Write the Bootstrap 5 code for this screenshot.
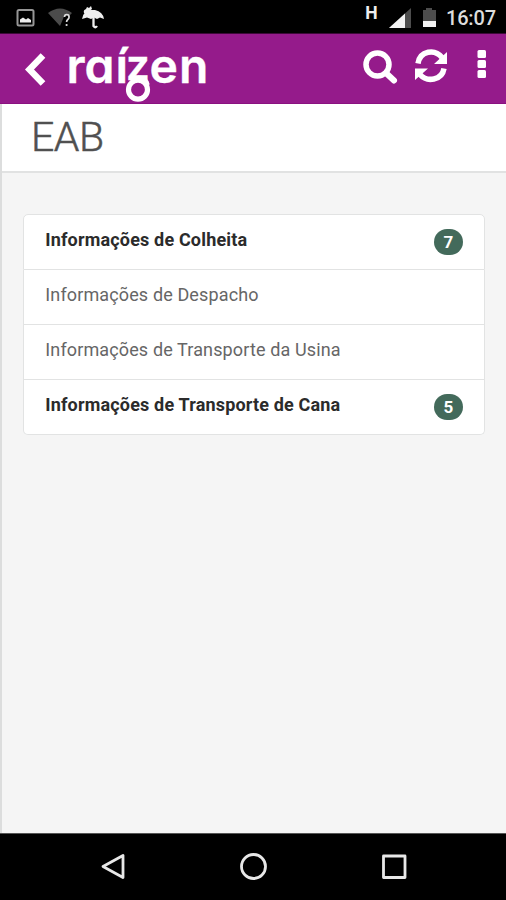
<!DOCTYPE html>
<html lang="pt-BR">
<head>
<meta charset="utf-8">
<meta name="viewport" content="width=device-width, initial-scale=1">
<title>Raízen - EAB</title>
<link href="https://cdn.jsdelivr.net/npm/bootstrap@5.3.0/dist/css/bootstrap.min.css" rel="stylesheet">
<style>
body{font-family:Roboto,"Liberation Sans",sans-serif;background:#f5f5f5;height:900px;overflow:hidden}
svg{display:block;flex:none}
.status-bar{height:34px;background:#000;border-bottom:1px solid #3d0a39}
.app-bar{height:70px;background:#951b8b;border-bottom:1px solid #8a1180}
.status-bar svg,.app-bar svg{width:506px}
.content{border-left:2px solid #dcdddd}
.title-bar{height:69px;border-bottom:2px solid #e1e2e2;padding:0 0 1px 29px}
.title-bar h1{font-size:41px;font-weight:300;color:#505050;letter-spacing:-.5px;-webkit-text-stroke:.5px #505050}
.menu-list{margin:41px 21px 0 21px;--bs-list-group-border-color:#e2e3e3;--bs-list-group-border-radius:5px}
.menu-list .list-group-item{height:55px;padding:0 21px 5px 21.3px;font-size:18px;color:#666;letter-spacing:.13px}
.menu-list .list-group-item:first-child{height:56px}
.menu-list .unread{font-weight:700;color:#2b2b2b;letter-spacing:.17px}
.menu-list .badge{width:29px;height:26px;padding:0;background:#436a5b;font-size:17px;margin-top:5px}
.nav-keys{height:67px;background:#000;border-top:1px solid #555}
</style>
<script src="https://cdn.jsdelivr.net/npm/bootstrap@5.3.0/dist/js/bootstrap.bundle.min.js"></script>
</head>
<body class="d-flex flex-column m-0">
<div class="status-bar flex-shrink-0">
<svg height="33" viewBox="0 0 506 33">
  <rect x="17.500" y="10" width="16" height="15.500" rx="1.500" fill="none" stroke="#969696" stroke-width="2"/>
  <path d="M20 22.500v-3l3-2 3 2 2-1.500 3 2v2.500z" fill="#eee"/>
  <path d="M48 13q12-9 24 0l-3 3q-5-1-6 3l-3 7z" fill="#4b4b4b"/>
  <path d="M64.500 17q0-2.500 2.300-2.500t2.300 2.500q0 1.500-1.300 2.500t-1.200 2.500" fill="none" stroke="#ddd" stroke-width="1.700"/><circle cx="66.600" cy="25" r="1.100" fill="#ddd"/>
  <path d="M82 19q1-8 9-9h4q8 2 9 9l-4-1.500-3 1.500-3-1.500-3 1.500-4-1.500zM84 13q-1-3 2-4l1-2 2 1 2-2 1 3-4 3z" fill="#eee"/>
  <path d="M93.500 17v9q2 2.500 3.500 0" fill="none" stroke="#eee" stroke-width="2.300"/>
  <text x="365.300" y="19" font-size="17.500" font-weight="700" fill="#eee">H</text>
  <path d="M389 28L411 8V28z" fill="#4d4d4d"/><path d="M389 28L405 13.500V28z" fill="#f2f2f2"/>
  <path d="M423 10h3V8h6v2h4v11h-13z" fill="#4d4d4d"/><path d="M423 21h13v6h-13z" fill="#f2f2f2"/>
  <text x="446" y="25.300" font-size="20" font-weight="500" fill="#ddd" textLength="50">16:07</text>
</svg>
</div>
<header class="app-bar flex-shrink-0">
<svg height="69" viewBox="0 34 506 69" fill="none" stroke="#fff">
  <path d="M43 55.500L29.500 69.500L43 83.500" stroke-width="6.500"/>
  <text y="83.300" x="66.500 84.500 115.500" font-family="Inter,sans-serif" font-size="48" font-weight="600" fill="#fff" stroke-width=".4" style="font-feature-settings:'cv11' 1">raí<tspan x="126" y="80" font-size="42">z</tspan><tspan x="149.500 179" y="83.300">en</tspan></text>
  <circle cx="138" cy="89.700" r="9.500" fill="#951b8b" stroke-width="5.200"/>
  <path d="M138 77.500Q146 77.500 147.800 85" stroke-width="4"/>
  <circle cx="377.500" cy="64.500" r="11.500" stroke-width="5.500"/><path d="M386 73l8 7.500" stroke-width="6" stroke-linecap="round"/>
  <path d="M418 63.500c2-13 17-15 24-6M444 68.500c-2 12-17 14-24 6" stroke-width="5.500"/>
  <path d="M447 52v12h-13zM415 80V68.500h13z" fill="#fff" stroke="none"/>
  <g fill="#fff" stroke="none"><rect x="477.500" y="50" width="8.500" height="8" rx="1.500"/><rect x="477.500" y="60" width="8.500" height="8" rx="1.500"/><rect x="477.500" y="70" width="8.500" height="8" rx="1.500"/></g>
</svg>
</header>
<main class="content flex-grow-1">
  <div class="title-bar bg-white d-flex align-items-center"><h1 class="m-0 lh-1">EAB</h1></div>
  <div class="list-group menu-list">
    <a class="list-group-item unread d-flex justify-content-between align-items-center">Informações de Colheita<span class="badge rounded-pill d-flex align-items-center justify-content-center">7</span></a>
    <a class="list-group-item d-flex align-items-center">Informações de Despacho</a>
    <a class="list-group-item d-flex align-items-center">Informações de Transporte da Usina</a>
    <a class="list-group-item unread d-flex justify-content-between align-items-center">Informações de Transporte de Cana<span class="badge rounded-pill d-flex align-items-center justify-content-center">5</span></a>
  </div>
</main>
<footer class="nav-keys flex-shrink-0">
<svg width="506" height="66" viewBox="0 834 506 66" fill="none" stroke="#e8e8e8" stroke-width="2.800" stroke-linejoin="round">
  <path d="M123 855.500V877.500L103 866.500z"/><circle cx="253.500" cy="866.500" r="12"/><rect x="383.500" y="856" width="21.500" height="21.500"/>
</svg>
</footer>
</body>
</html>
